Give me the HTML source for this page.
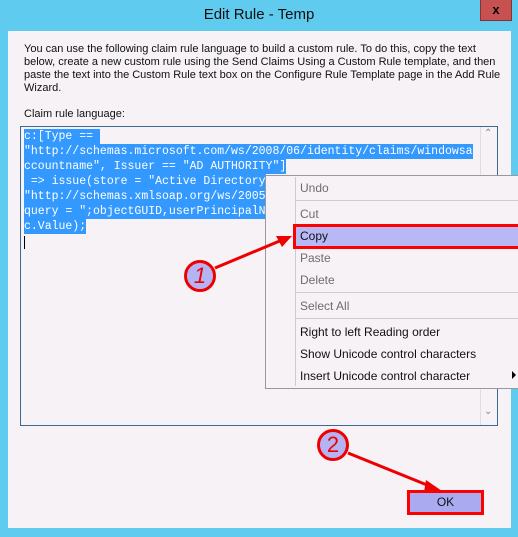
<!DOCTYPE html>
<html><head><style>
*{margin:0;padding:0;box-sizing:border-box}
body{width:518px;height:537px;background:#5fcbef;position:relative;overflow:hidden;font-family:"Liberation Sans",sans-serif;font-size:12px;color:#000}
.abs{position:absolute}
.title{left:0;top:6px;width:518px;text-align:center;font-size:15px;color:#111}
.close{left:480px;top:0;width:32px;height:21px;background:#c75050;border:1px solid #8a3030;border-top:none;color:#000;font-weight:bold;text-align:center;font-size:13px;line-height:20px}
.client{left:8px;top:31px;width:503px;height:497px;background:#f6f2f6}
.desc{left:24px;top:43px;width:490px;line-height:13px;font-size:11px;color:#111;white-space:nowrap}
.tb{left:20px;top:126px;width:478px;height:300px;border:1px solid #3a6a94;background:#f6f2f6}
.code{left:24px;top:129px;font-family:"Liberation Mono",monospace;font-size:11.5px;line-height:15px;color:#fff}
.code span{background:#3399ff;white-space:pre;display:inline-block}
.sb{left:480px;top:127px;width:17px;height:298px;border-left:1px solid #ddd}
.menu{left:265px;top:175px;width:260px;height:214px;background:#f6f2f6;border:1px solid #999}
.gut{left:295px;top:177px;width:1px;height:209px;background:#ccc}
.mi{left:300px;font-size:12px;color:#111}
.dis{color:#6d6d6d}
.sep{left:296px;width:222px;height:1px;background:#ccc}
.copy{left:293px;top:224px;width:228px;height:25px;background:#b8b8f6;border:3px solid #f00}
.circ{width:32px;height:32px;border-radius:50%;background:#b4b4f4;border:3px solid #e00;color:#e00;font-size:22px;font-style:italic;text-align:center;line-height:26px}
.ok{left:407px;top:490px;width:77px;height:25px;border:3px solid #f00;background:#aaaaf0;text-align:center;line-height:19px;font-size:12px;color:#111}
</style></head><body>
<div class="abs title">Edit Rule - Temp</div>
<div class="abs close">x</div>
<div class="abs client"></div>
<div class="abs desc">You can use the following claim rule language to build a custom rule. To do this, copy the text<br>below, create a new custom rule using the Send Claims Using a Custom Rule template, and then<br>paste the text into the Custom Rule text box on the Configure Rule Template page in the Add Rule<br>Wizard.</div>
<div class="abs desc" style="top:108px">Claim rule language:</div>
<div class="abs tb"></div>
<div class="abs code">
<span>c:[Type == </span><br>
<span>"http://schemas.microsoft.com/ws/2008/06/identity/claims/windowsa</span><br>
<span>ccountname", Issuer == "AD AUTHORITY"]</span><br>
<span> =&gt; issue(store = "Active Directory</span><br>
<span>"http://schemas.xmlsoap.org/ws/2005</span><br>
<span>query = ";objectGUID,userPrincipalN</span><br>
<span>c.Value);</span>
</div>
<div class="abs" style="left:24px;top:236px;width:1px;height:13px;background:#000"></div>
<div class="abs sb"></div>
<div class="abs" style="left:484px;top:128px;font-size:10px;color:#888">&#8963;</div>
<div class="abs" style="left:484px;top:406px;font-size:10px;color:#888">&#8964;</div>
<div class="abs menu"></div>
<div class="abs gut"></div>
<div class="abs copy"></div>
<div class="abs mi dis" style="top:181px">Undo</div>
<div class="abs sep" style="top:200px"></div>
<div class="abs mi dis" style="top:207px">Cut</div>
<div class="abs mi" style="top:229px">Copy</div>
<div class="abs mi dis" style="top:251px">Paste</div>
<div class="abs mi dis" style="top:273px">Delete</div>
<div class="abs sep" style="top:292px"></div>
<div class="abs mi dis" style="top:299px">Select All</div>
<div class="abs sep" style="top:318px"></div>
<div class="abs mi" style="top:325px">Right to left Reading order</div>
<div class="abs mi" style="top:347px">Show Unicode control characters</div>
<div class="abs mi" style="top:369px">Insert Unicode control character</div>
<div class="abs" style="left:512px;top:371px;width:0;height:0;border-left:4px solid #000;border-top:4px solid transparent;border-bottom:4px solid transparent"></div>
<svg class="abs" style="left:0;top:0" width="518" height="537">
<line x1="215" y1="268" x2="282" y2="240" stroke="#e00" stroke-width="3"/>
<polygon points="292,236 276,236 282,247" fill="#e00"/>
<line x1="348" y1="453" x2="432" y2="487" stroke="#e00" stroke-width="3"/>
<polygon points="442,491 426,480 424,492" fill="#e00"/>
</svg>
<div class="abs circ" style="left:184px;top:260px">1</div>
<div class="abs circ" style="left:317px;top:429px;font-style:normal">2</div>
<div class="abs ok">OK</div>
</body></html>
